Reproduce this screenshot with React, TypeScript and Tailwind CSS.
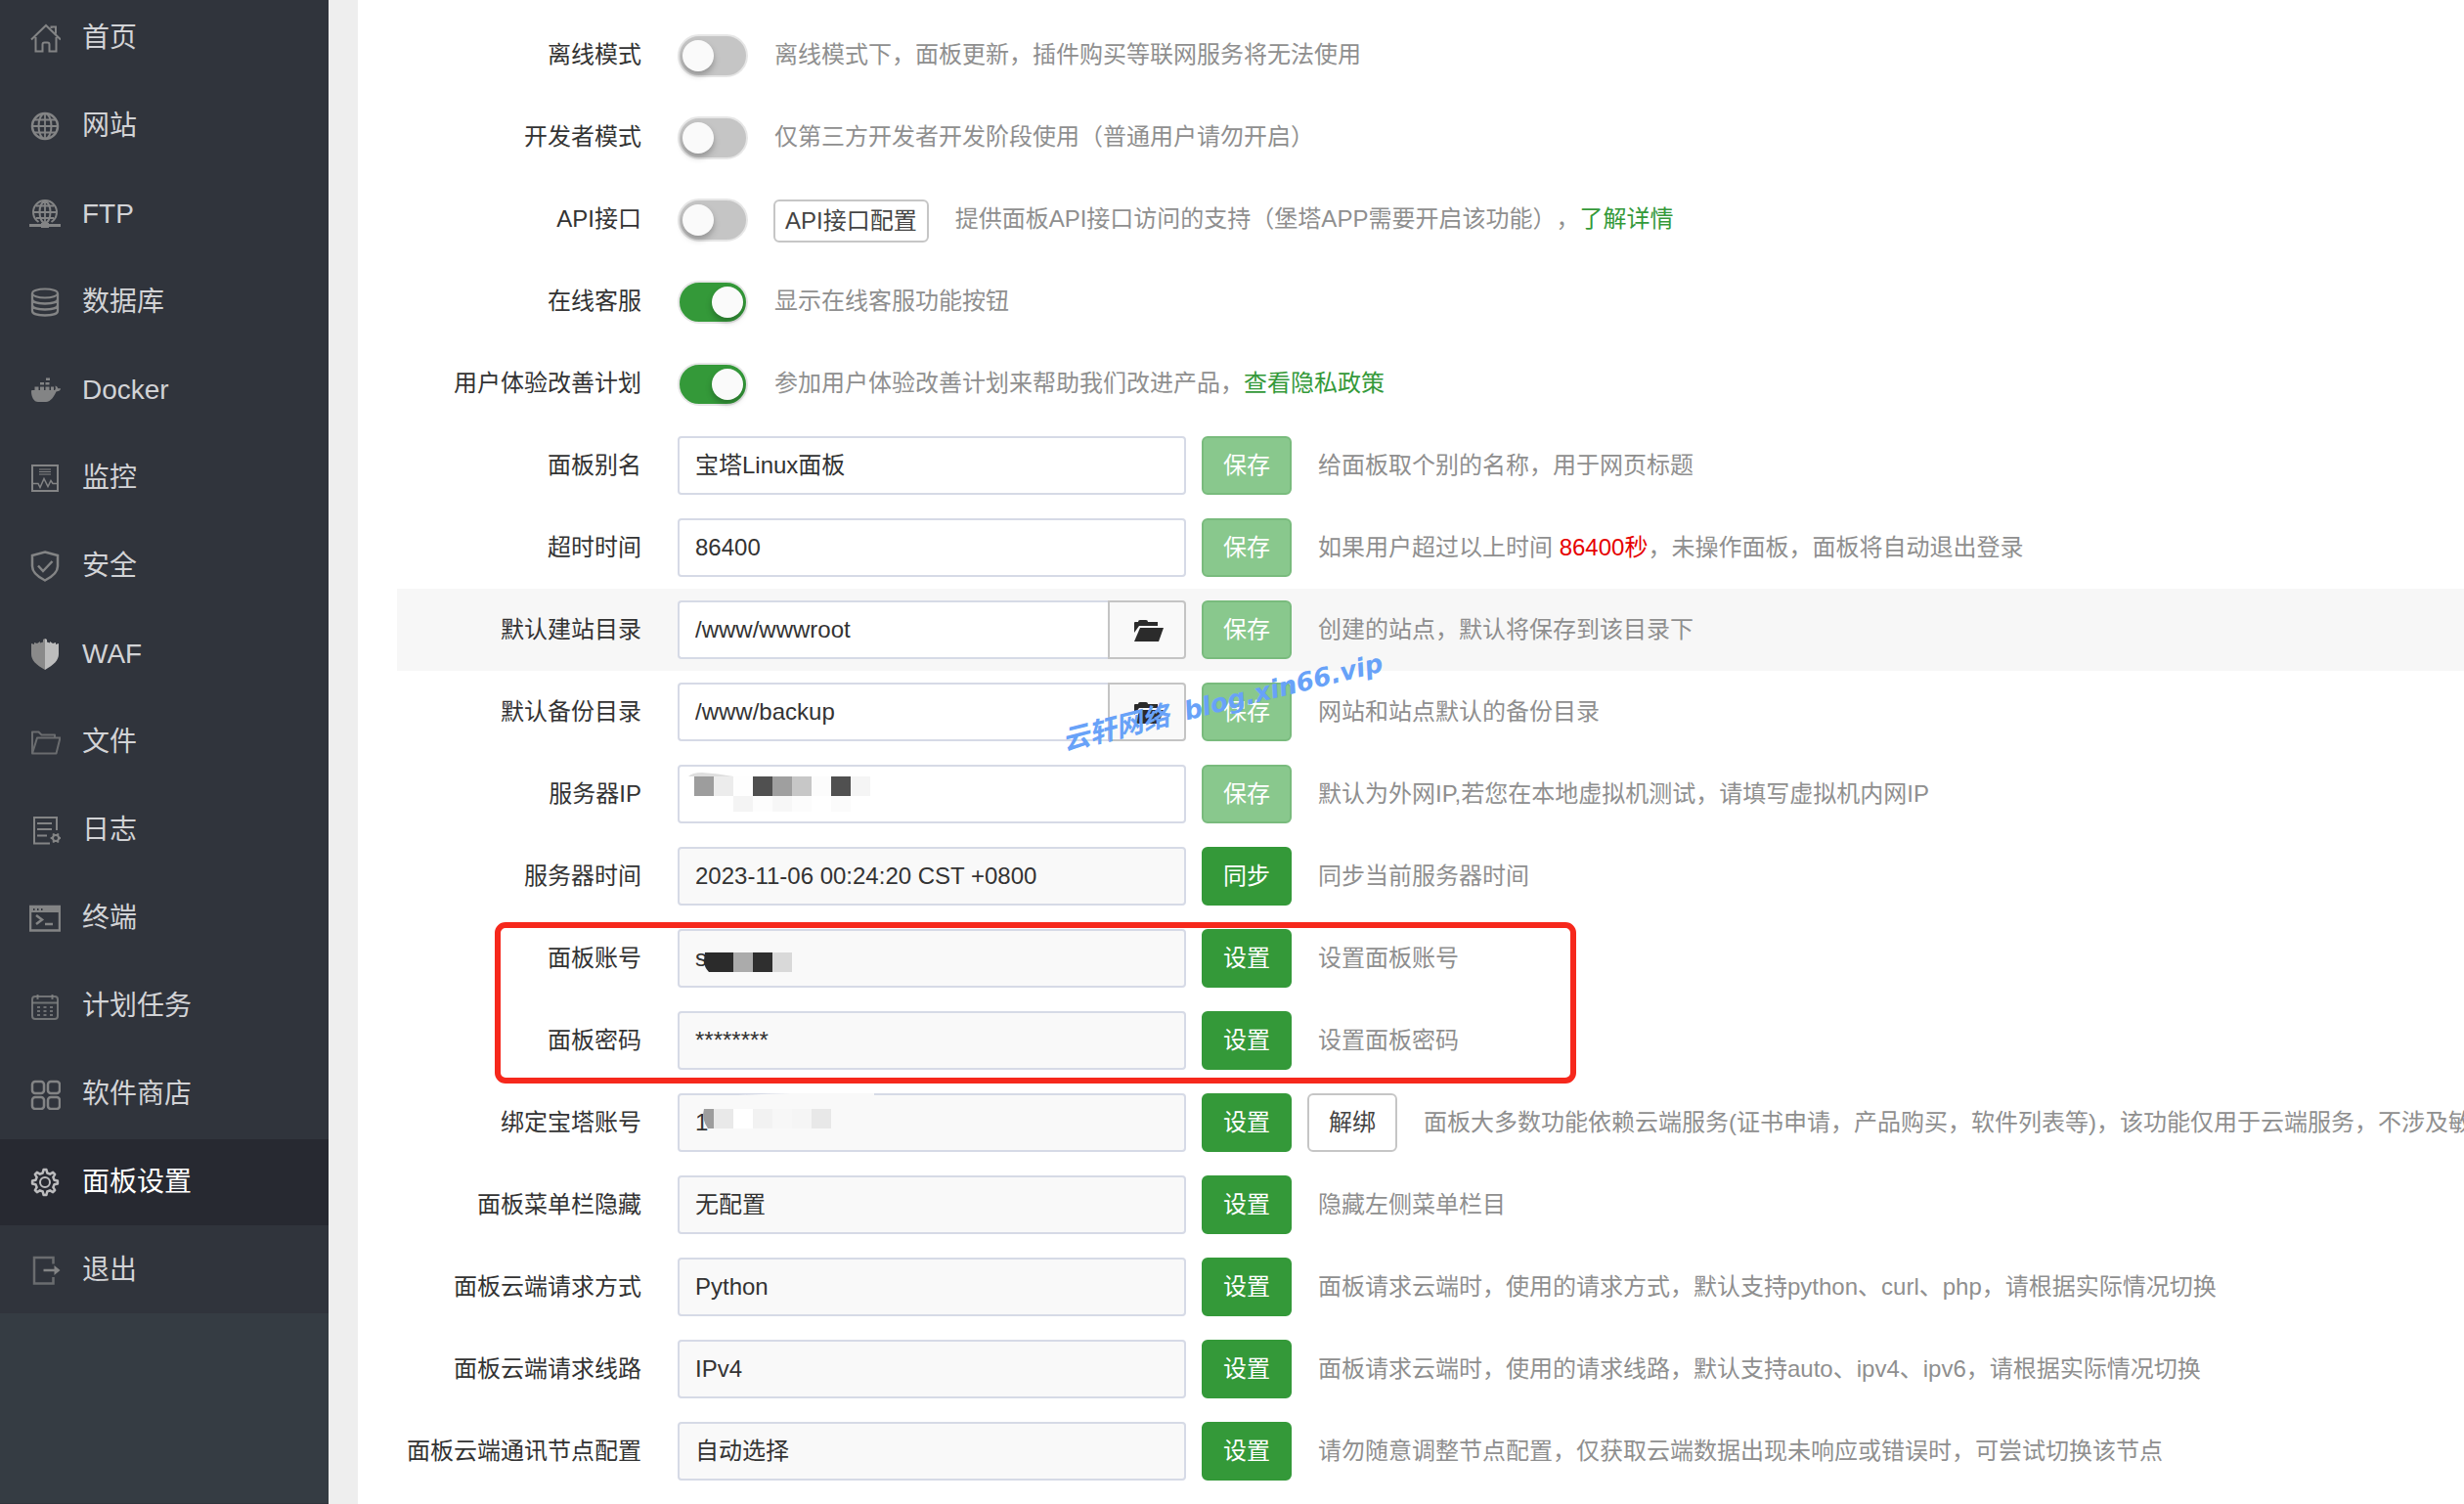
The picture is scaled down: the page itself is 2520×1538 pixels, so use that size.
import { ReactNode, useState } from "react";
import clsx from "clsx";

// Outline of a cog: four points per tooth, alternating between both radii
function gearPath(cx: number, cy: number, outer: number, inner: number, teeth: number) {
  const points: string[] = [];
  const step = (Math.PI * 2) / teeth;
  for (let i = 0; i < teeth; i++) {
    const a = i * step;
    [
      [inner, a - step * 0.3],
      [outer, a - step * 0.14],
      [outer, a + step * 0.14],
      [inner, a + step * 0.3],
    ].forEach(([r, t]) => points.push(`${(cx + r * Math.cos(t)).toFixed(2)} ${(cy + r * Math.sin(t)).toFixed(2)}`));
  }
  return `M${points.join("L")}Z`;
}

const icons: Record<string, ReactNode> = {
  home: (
    <path d="M2 17.500 17 3l15 14.500M22.500 6V4.500h4.500v7M6.500 15v14.500h7V22.500q0-2 2-2h3q2 0 2 2v7h7V15" strokeWidth="2" />
  ),
  globe: (
    <>
      <circle cx="16" cy="16" r="13" strokeWidth="2.500" />
      <ellipse cx="16" cy="16" rx="6.500" ry="13" />
      <path d="M16 3v26M3 16h26M5 9.500h22M5 22.500h22" strokeWidth="1.800" />
    </>
  ),
  ftp: (
    <>
      <path d="M9.500 24a12 12 0 1 1 13 0" />
      <ellipse cx="16" cy="14" rx="5.500" ry="11" />
      <path d="M16 3v22M4 14h24M7 7.500h18M7 20h18" strokeWidth="1.800" />
      <path d="M0 27.500h32" strokeWidth="3" />
      <path d="M12 25h8v5h-8zM13.500 2h5v3h-5z" fill="currentColor" stroke="none" />
    </>
  ),
  database: (
    <>
      <ellipse cx="16" cy="7" rx="13" ry="4.500" />
      <path d="M3 7v18c0 6 26 6 26 0V7M3 13c0 6 26 6 26 0M3 19c0 6 26 6 26 0" strokeWidth="2.300" />
    </>
  ),
  docker: (
    <g fill="currentColor" stroke="none">
      <path d="M2 17q0-1 1-1h23c1.500-1 .500-3 .500-4.500 2 .500 2.500 2 2.800 2.800h2.700q0 2.700-4.500 3.200C25.500 22 22 28 17 28H9C4.500 28 2 23 2 17z" />
      <path d="M5.500 12.500h4V16h-4zM11 12.500h4V16h-4zM16.500 12.500h4V16h-4zM22 12.500h3V16h-3zM11 8h4v2.500h-4zM16.500 8h4v2.500h-4zM17 3.500h4V6h-4z" />
    </g>
  ),
  monitor: (
    <>
      <path d="M3 3h26v26H3z" />
      <path d="M10 7h12M10 9.500h12M10 12h12" strokeWidth="1" />
      <path d="M4 21.500h5l2 4 4-9 4 8 3-6 2 3h5" strokeWidth="1.500" />
    </>
  ),
  shield: (
    <>
      <path d="M16 1.500 29 5v11c0 7-6 11-13 14.500C9 27 3 23 3 16V5z" strokeWidth="2.500" />
      <path d="m9 15.500 5 5.500 9.500-10" strokeWidth="2.500" />
    </>
  ),
  waf: (
    <g stroke="none">
      <path d="M16 0v32C7 27 2 22 2 16V5l3 1V4l3 1 3-2v1.500l3-1V1z" fill="#8a8a8a" />
      <path d="M16 0v32c9-5 14-10 14-16V5l-3 1V4l-3 1-3-2v1.500l-3-1V1z" fill="#bdbdbd" />
    </g>
  ),
  folder: (
    <path
      d="M3 27V5.500h6.500l3 3H26v3M3 27.500 8 11.500h23.500L27.500 27.500z"
      strokeLinejoin="round"
      className="opacity-70"
    />
  ),
  log: (
    <>
      <path d="M28 16V3H5v26.500h16M8 9h15M8 15h15M8 21.500h10" />
      <path d={gearPath(27, 24, 5.5, 4.2, 6)} fill="currentColor" stroke="none" />
      <circle cx="27" cy="24" r="2" fill="#30343c" stroke="none" />
    </>
  ),
  terminal: (
    <>
      <path d="M1 4h30v24.500H1z" strokeWidth="2.500" />
      <path d="M1 4h30v6H1z" fill="currentColor" stroke="none" />
      <path d="M4 7h1.500M8 7h1.500M12 7h1.500" stroke="#30343c" />
      <path d="m7 13 6 4.500-6 4.500M16 22h8" strokeWidth="2.500" />
    </>
  ),
  calendar: (
    <>
      <rect x="3" y="6" width="26" height="23" rx="3" className="opacity-80" />
      <path d="M3 12.500h26M8.500 4v5M23.500 4v5" className="opacity-80" />
      <path d="M8 17h3M14.500 17h3M21 17h3M8 21h3M14.500 21h3M21 21h3M8 25h3M14.500 25h3M21 25h3" strokeWidth="1.500" />
    </>
  ),
  apps: (
    <g strokeWidth="2.500">
      <rect x="3" y="3" width="12" height="12" rx="3" />
      <rect x="19" y="3" width="12" height="12" rx="3" />
      <rect x="3" y="19" width="12" height="12" rx="3" />
      <rect x="19" y="19" width="12" height="12" rx="3" />
    </g>
  ),
  gear: (
    <>
      <path d={gearPath(16, 16, 13, 9.8, 8)} strokeLinejoin="round" strokeWidth="2.500" />
      <circle cx="16" cy="16" r="5" />
    </>
  ),
  exit: (
    <>
      <path d="M24.500 9.500V3H5v26.500h19.500V23" className="opacity-70" strokeWidth="2.500" />
      <path d="M14.500 16H29" strokeWidth="2.500" />
      <path d="m25.500 11 6 5-6 5z" fill="currentColor" stroke="none" />
    </>
  ),
};

const menu = [
  { name: "首页", icon: "home" },
  { name: "网站", icon: "globe" },
  { name: "FTP", icon: "ftp" },
  { name: "数据库", icon: "database" },
  { name: "Docker", icon: "docker" },
  { name: "监控", icon: "monitor" },
  { name: "安全", icon: "shield" },
  { name: "WAF", icon: "waf" },
  { name: "文件", icon: "folder" },
  { name: "日志", icon: "log" },
  { name: "终端", icon: "terminal" },
  { name: "计划任务", icon: "calendar" },
  { name: "软件商店", icon: "apps" },
  { name: "面板设置", icon: "gear", active: true },
  { name: "退出", icon: "exit" },
];

function Sidebar() {
  return (
    <aside className="w-[336px] shrink-0 bg-[#353c43] border-b border-[#30343c]">
      <nav className="-mt-[5px] bg-[#30343c]">
        <ul className="flex flex-col gap-0.5">
          {menu.map((item) => (
            <li key={item.icon}>
              <a
                href="#"
                className={clsx(
                  "flex items-center h-[88px] pl-[30px] gap-[22px] text-[28px]",
                  item.active ? "bg-[#272931] text-white" : "text-[#d2d3d6]"
                )}
              >
                <svg
                  viewBox="0 0 32 32"
                  fill="none"
                  stroke="currentColor"
                  strokeWidth="2"
                  className={clsx("size-8 shrink-0", item.active ? "text-[#bcbcbe]" : "text-[#838485]")}
                >
                  {icons[item.icon]}
                </svg>
                <span>{item.name}</span>
              </a>
            </li>
          ))}
        </ul>
      </nav>
    </aside>
  );
}

function Row({ id, label, active, children }: { id: string; label: string; active?: boolean; children: ReactNode }) {
  return (
    <div className={clsx("flex items-center h-[84px] whitespace-nowrap", active && "bg-[#f7f7f7]")}>
      <label htmlFor={id} className="w-[250px] mr-[37px] shrink-0 text-right text-[#333]">
        {label}
      </label>
      {children}
    </div>
  );
}

function Desc({ children }: { children: ReactNode }) {
  return <p className="ml-[27px] text-[#8f8f8f]">{children}</p>;
}

function Switch({ id, on }: { id: string; on?: boolean }) {
  const [checked, setChecked] = useState(!!on);
  return (
    <input
      id={id}
      type="checkbox"
      role="switch"
      checked={checked}
      onChange={() => setChecked(!checked)}
      className="appearance-none relative shrink-0 mt-0.5 w-[72px] h-11 rounded-full border-2 border-[#e6e6e6] bg-[#c5c5c5] checked:bg-[#349939] before:absolute before:left-[3px] before:top-1 before:size-8 before:rounded-full before:bg-[#fafafa] before:shadow-[0_4px_6px_rgba(0,0,0,0.25)] checked:before:left-[33px]"
    />
  );
}

function Button({ kind, children }: { kind: "save" | "set" | "plain"; children: ReactNode }) {
  return (
    <button
      type="button"
      className={clsx(
        "ml-4 w-[92px] h-[60px] shrink-0 rounded-md border-2",
        kind === "save" && "bg-[#89c88d] border-[#79bb7d] text-white",
        kind === "set" && "bg-[#349939] border-[#349939] text-white",
        kind === "plain" && "bg-white border-[#c6c6c6] text-[#444]"
      )}
    >
      {children}
    </button>
  );
}

type FieldProps = { id: string; value: string; readOnly?: boolean; folder?: boolean; children?: ReactNode };

function Field({ id, value, readOnly, folder, children }: FieldProps) {
  return (
    <div className="relative flex w-[520px] h-[60px] shrink-0">
      <input
        id={id}
        type="text"
        defaultValue={value}
        readOnly={readOnly}
        className={clsx(
          "flex-1 min-w-0 px-4 border-2 border-[#d6dae6] text-[#333] outline-none",
          folder ? "rounded-l border-r-0" : "rounded",
          readOnly ? "bg-[#f9f9f9]" : "bg-white"
        )}
      />
      {folder && (
        <button
          type="button"
          aria-label="选择目录"
          className="flex items-center justify-center w-20 rounded-r border-2 border-[#c4c4c4] bg-[#f9f9f9]"
        >
          <svg viewBox="0 0 30 22" className="mt-0.5 ml-1 w-[30px] h-[22px] fill-[#2b2b2b]">
            <path d="M0 13V3q0-1 1-1h3q0-2 2-2h6q2 0 2 2h10v4H5z" />
            <path d="M6 8h24l-5 14H0z" />
          </svg>
        </button>
      )}
      {children}
    </div>
  );
}

// Pixelated blocks that hide a private value. Each block is [x, y, width, colour], 20px high.
type Block = [number, number, number, string];

function Mosaic({ blocks, children }: { blocks: Block[]; children?: ReactNode }) {
  return (
    <svg viewBox="0 0 520 60" className="absolute inset-0 size-full pointer-events-none">
      {blocks.map(([x, y, w, fill]) => (
        <rect key={`${x}-${y}`} x={x} y={y} width={w} height="20" fill={fill} />
      ))}
      {children}
    </svg>
  );
}

const ipBlocks: Block[] = [
  [57, 28, 20, "#f4f4f4"],
  [77, 28, 20, "#fdfdfd"],
  [97, 28, 20, "#f7f7f7"],
  [117, 28, 20, "#fcfcfc"],
  [157, 28, 20, "#fbfbfb"],
  [17, 12, 20, "#9d9d9d"],
  [37, 12, 20, "#ececec"],
  [57, 12, 20, "#fefefe"],
  [77, 12, 20, "#505050"],
  [97, 12, 20, "#9f9f9f"],
  [117, 12, 20, "#c7c7c7"],
  [137, 12, 20, "#fcfcfc"],
  [157, 12, 20, "#505050"],
  [177, 12, 20, "#f5f5f5"],
];

const userBlocks: Block[] = [
  [57, 24, 20, "#ababab"],
  [77, 24, 20, "#2f2f2f"],
  [97, 24, 20, "#d9d9d9"],
];

const bindBlocks: Block[] = [
  [37, 16, 20, "#e9e9e9"],
  [57, 16, 20, "#ffffff"],
  [77, 16, 20, "#f2f2f2"],
  [97, 16, 20, "#f7f7f7"],
  [117, 16, 20, "#f5f5f5"],
  [137, 16, 20, "#e8e8e8"],
];

export default function App() {
  return (
    <div className="flex min-h-screen overflow-hidden bg-[#eee] text-[24px] leading-8 font-['Liberation_Sans','Noto_Sans_CJK_SC',sans-serif] [text-spacing-trim:space-all]">
      <Sidebar />

      <main className="flex-1 min-w-0 ml-[30px] pt-3.5 pl-10 bg-white overflow-hidden">
        <form onSubmit={(e) => e.preventDefault()}>
          <Row id="offline" label="离线模式">
            <Switch id="offline" />
            <Desc>离线模式下，面板更新，插件购买等联网服务将无法使用</Desc>
          </Row>
          <Row id="developer" label="开发者模式">
            <Switch id="developer" />
            <Desc>仅第三方开发者开发阶段使用（普通用户请勿开启）</Desc>
          </Row>
          <Row id="api" label="API接口">
            <Switch id="api" />
            <button
              type="button"
              className="mt-1 ml-[26px] h-11 px-2.5 shrink-0 rounded-md border-2 border-[#c6c6c6] bg-white text-[#444]"
            >
              API接口配置
            </button>
            <Desc>
              提供面板API接口访问的支持（堡塔APP需要开启该功能），
              <a href="#" className="text-[#349939]">了解详情</a>
            </Desc>
          </Row>
          <Row id="service" label="在线客服">
            <Switch id="service" on />
            <Desc>显示在线客服功能按钮</Desc>
          </Row>
          <Row id="improve" label="用户体验改善计划">
            <Switch id="improve" on />
            <Desc>
              参加用户体验改善计划来帮助我们改进产品，
              <a href="#" className="text-[#349939]">查看隐私政策</a>
            </Desc>
          </Row>

          <Row id="alias" label="面板别名">
            <Field id="alias" value="宝塔Linux面板" />
            <Button kind="save">保存</Button>
            <Desc>给面板取个别的名称，用于网页标题</Desc>
          </Row>
          <Row id="timeout" label="超时时间">
            <Field id="timeout" value="86400" />
            <Button kind="save">保存</Button>
            <Desc>
              如果用户超过以上时间 <span className="text-[#e60000]">86400秒</span>，未操作面板，面板将自动退出登录
            </Desc>
          </Row>
          <Row id="site-path" label="默认建站目录" active>
            <Field id="site-path" value="/www/wwwroot" folder />
            <Button kind="save">保存</Button>
            <Desc>创建的站点，默认将保存到该目录下</Desc>
          </Row>
          <div className="relative">
            <Row id="backup-path" label="默认备份目录">
              <Field id="backup-path" value="/www/backup" folder />
              <Button kind="save">保存</Button>
              <Desc>网站和站点默认的备份目录</Desc>
            </Row>
            <div className="absolute left-[676px] top-[16px] flex items-center gap-4 -rotate-14 whitespace-nowrap italic font-bold text-[#68a2f8] pointer-events-none">
              <span className="text-[28px]">云轩网络</span>
              <span className="font-['DejaVu_Sans'] text-[26px]">blog.xin66.vip</span>
            </div>
          </div>
          <Row id="ip" label="服务器IP">
            <Field id="ip" value="">
              <Mosaic blocks={ipBlocks}>
                <path d="M11 12q4-4 14-4 16 1 32 4z" fill="#dedede" />
              </Mosaic>
            </Field>
            <Button kind="save">保存</Button>
            <Desc>默认为外网IP,若您在本地虚拟机测试，请填写虚拟机内网IP</Desc>
          </Row>
          <Row id="time" label="服务器时间">
            <Field id="time" value="2023-11-06 00:24:20 CST +0800" readOnly />
            <Button kind="set">同步</Button>
            <Desc>同步当前服务器时间</Desc>
          </Row>

          <div className="relative">
            <Row id="username" label="面板账号">
              <Field id="username" value="s" readOnly>
                <Mosaic blocks={userBlocks}>
                  <path d="M28 24h29v20H32q-5-5-5-12z" fill="#2b2b2b" />
                </Mosaic>
              </Field>
              <Button kind="set">设置</Button>
              <Desc>设置面板账号</Desc>
            </Row>
            <Row id="password" label="面板密码">
              <Field id="password" value="********" readOnly />
              <Button kind="set">设置</Button>
              <Desc>设置面板密码</Desc>
            </Row>
            <div className="absolute left-[100px] top-[5px] -bottom-0.5 w-[1106px] rounded-[11px] border-6 border-[#f6281c] pointer-events-none" />
          </div>

          <Row id="bind" label="绑定宝塔账号">
            <Field id="bind" value="1" readOnly>
              <Mosaic blocks={bindBlocks}>
                <path d="M27 16h10v20h-6q-7-10-4-20z" fill="#9d9d9d" />
                <path d="M62 2q60-3 139-3v3z" fill="#f9f9f9" />
              </Mosaic>
            </Field>
            <Button kind="set">设置</Button>
            <Button kind="plain">解绑</Button>
            <Desc>面板大多数功能依赖云端服务(证书申请，产品购买，软件列表等)，该功能仅用于云端服务，不涉及敏</Desc>
          </Row>
          <Row id="menu-hide" label="面板菜单栏隐藏">
            <Field id="menu-hide" value="无配置" readOnly />
            <Button kind="set">设置</Button>
            <Desc>隐藏左侧菜单栏目</Desc>
          </Row>
          <Row id="request-type" label="面板云端请求方式">
            <Field id="request-type" value="Python" readOnly />
            <Button kind="set">设置</Button>
            <Desc>面板请求云端时，使用的请求方式，默认支持python、curl、php，请根据实际情况切换</Desc>
          </Row>
          <Row id="request-line" label="面板云端请求线路">
            <Field id="request-line" value="IPv4" readOnly />
            <Button kind="set">设置</Button>
            <Desc>面板请求云端时，使用的请求线路，默认支持auto、ipv4、ipv6，请根据实际情况切换</Desc>
          </Row>
          <Row id="node" label="面板云端通讯节点配置">
            <Field id="node" value="自动选择" readOnly />
            <Button kind="set">设置</Button>
            <Desc>请勿随意调整节点配置，仅获取云端数据出现未响应或错误时，可尝试切换该节点</Desc>
          </Row>
        </form>
      </main>
    </div>
  );
}
